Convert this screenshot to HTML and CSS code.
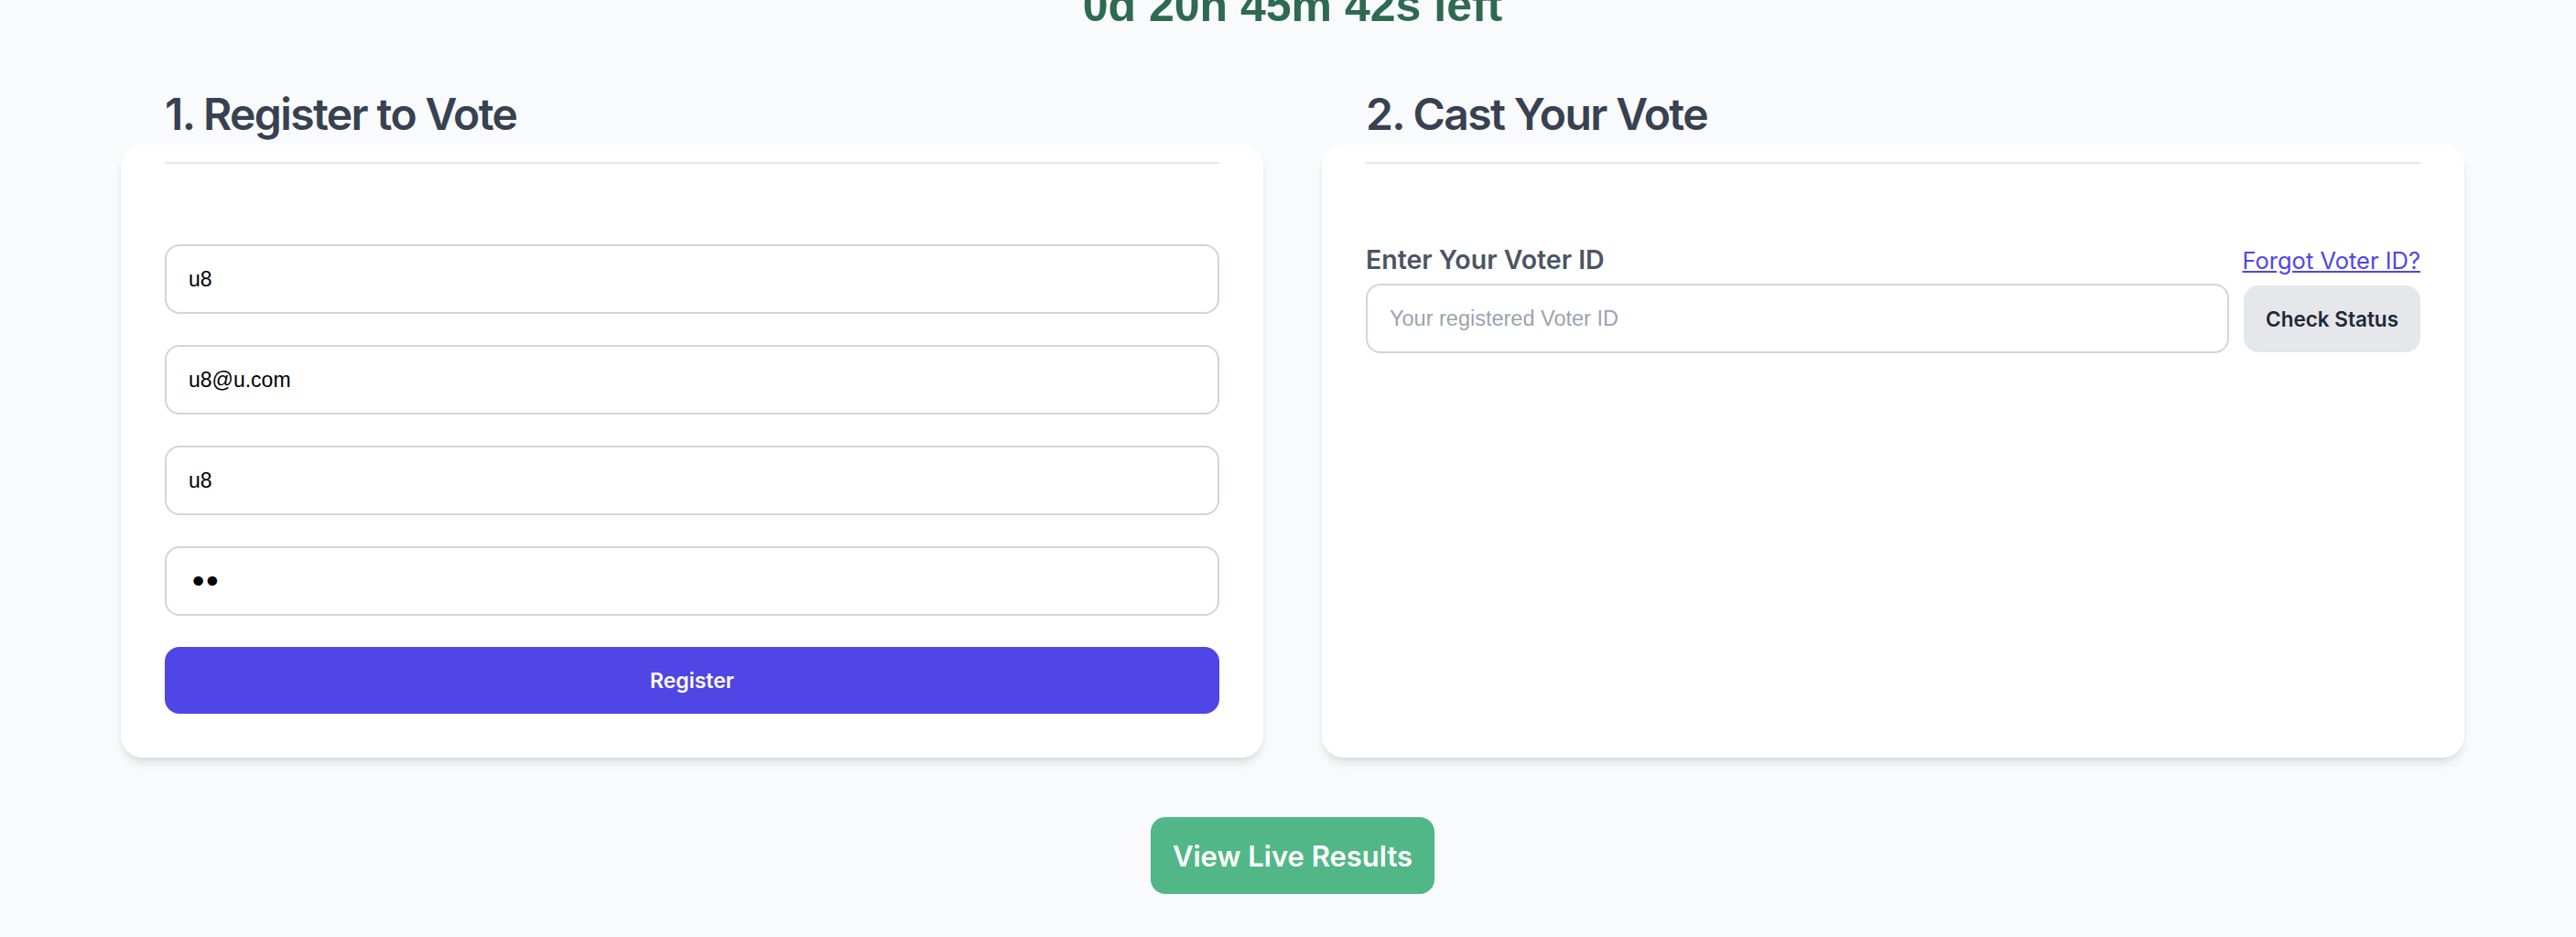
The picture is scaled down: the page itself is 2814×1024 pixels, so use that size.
FILE: index.html
```html
<!DOCTYPE html>
<html lang="en">
<head>
<meta charset="utf-8">
<title>Vote</title>
<link rel="stylesheet" href="styles.css">
</head>
<body>
<main class="page">
  <div class="countdown">0d 20h 45m 42s left</div>
  <div class="panels">
    <section class="card">
      <h2 class="card-title">1. Register to Vote</h2>
      <form class="reg-form">
        <input class="field" type="text" value="u8">
        <input class="field" type="email" value="u8@u.com">
        <input class="field" type="text" value="u8">
        <input class="field field-password" type="password" value="u8">
        <button class="btn-primary" type="button">Register</button>
      </form>
    </section>
    <section class="card">
      <h2 class="card-title">2. Cast Your Vote</h2>
      <div class="vote-body">
        <div class="label-row">
          <label class="label" for="vid">Enter Your Voter ID</label>
          <a class="link" href="#">Forgot Voter ID?</a>
        </div>
        <div class="id-row">
          <input class="field field-placeholder" id="vid" type="text" placeholder="Your registered Voter ID">
          <button class="btn-secondary" type="button">Check Status</button>
        </div>
      </div>
    </section>
  </div>
  <div class="results-wrap">
    <button class="btn-results" type="button">View Live Results</button>
  </div>
</main>
</body>
</html>
```
FILE: styles.css
```css
html, body {
  margin: 0;
  padding: 0;
}
body {
  background: #f9fafb;
  font-family: Inter, "Noto Sans", sans-serif;
  overflow: hidden;
}
.page {
  width: 2560px;
  margin-left: 132px;
}
.countdown {
  margin-top: -24px;
  height: 60px;
  line-height: 60px;
  text-align: center;
  font-family: "Liberation Sans", Arial, sans-serif;
  font-weight: 700;
  font-size: 50px;
  color: #2d6a4f;
}
.panels {
  display: grid;
  grid-template-columns: 1248px 1248px;
  column-gap: 64px;
  margin-top: 122px;
}
.card {
  display: flex;
  flex-direction: column;
  background: #ffffff;
  border-radius: 24px;
  padding: 0 48px 48px;
  box-shadow: 0 8px 12px -2px rgba(0, 0, 0, 0.09), 0 4px 8px -4px rgba(0, 0, 0, 0.09);
}
.card-title {
  margin: -65.5px 0 0;
  font-size: 48px;
  line-height: 64px;
  font-weight: 600;
  color: #374151;
  padding-bottom: 20px;
  border-bottom: 2px solid #e5e7eb;
  letter-spacing: -1.6px;
}
.reg-form {
  margin: 88.5px 0 0;
  display: flex;
  flex-direction: column;
  gap: 34px;
}
.field {
  box-sizing: border-box;
  height: 76px;
  width: 100%;
  border: 2px solid #d1d5db;
  border-radius: 16px;
  padding: 0 24px;
  font-family: "Liberation Sans", Arial, sans-serif;
  font-size: 23px;
  color: #000;
  background: #fff;
  outline: none;
}
.field-password {
  font-family: "DejaVu Sans", sans-serif;
  font-size: 36px;
  letter-spacing: -6px;
}
.field-placeholder {
  font-size: 23.5px;
}
.field::placeholder {
  color: #9ca3af;
}
.btn-primary {
  height: 73px;
  border: 0;
  border-radius: 16px;
  background: #4f46e5;
  color: #fff;
  font-family: Inter, sans-serif;
  font-weight: 600;
  font-size: 23px;
  padding-top: 2px;
}
.vote-body {
  margin-top: 85.5px;
}
.label-row {
  display: flex;
  justify-content: space-between;
  align-items: baseline;
  margin-bottom: 5px;
}
.label {
  font-size: 28.5px;
  line-height: 40px;
  font-weight: 600;
  color: #4b5563;
}
.link {
  font-size: 25.5px;
  line-height: 40px;
  color: #4f46e5;
  text-decoration: underline;
}
.id-row {
  display: flex;
  align-items: center;
  gap: 16px;
}
.id-row .field {
  flex: 1;
  width: auto;
}
.btn-secondary {
  height: 73px;
  padding: 0 24px;
  border: 0;
  border-radius: 16px;
  background: #e5e7eb;
  color: #1f2937;
  font-family: Inter, sans-serif;
  font-weight: 600;
  font-size: 22.5px;
  white-space: nowrap;
}
.results-wrap {
  display: flex;
  justify-content: center;
  margin-top: 65px;
}
.btn-results {
  height: 84px;
  padding: 0 24px;
  border: 0;
  border-radius: 16px;
  background: #52b788;
  color: #fff;
  font-family: Inter, sans-serif;
  font-weight: 600;
  font-size: 31px;
}
```
